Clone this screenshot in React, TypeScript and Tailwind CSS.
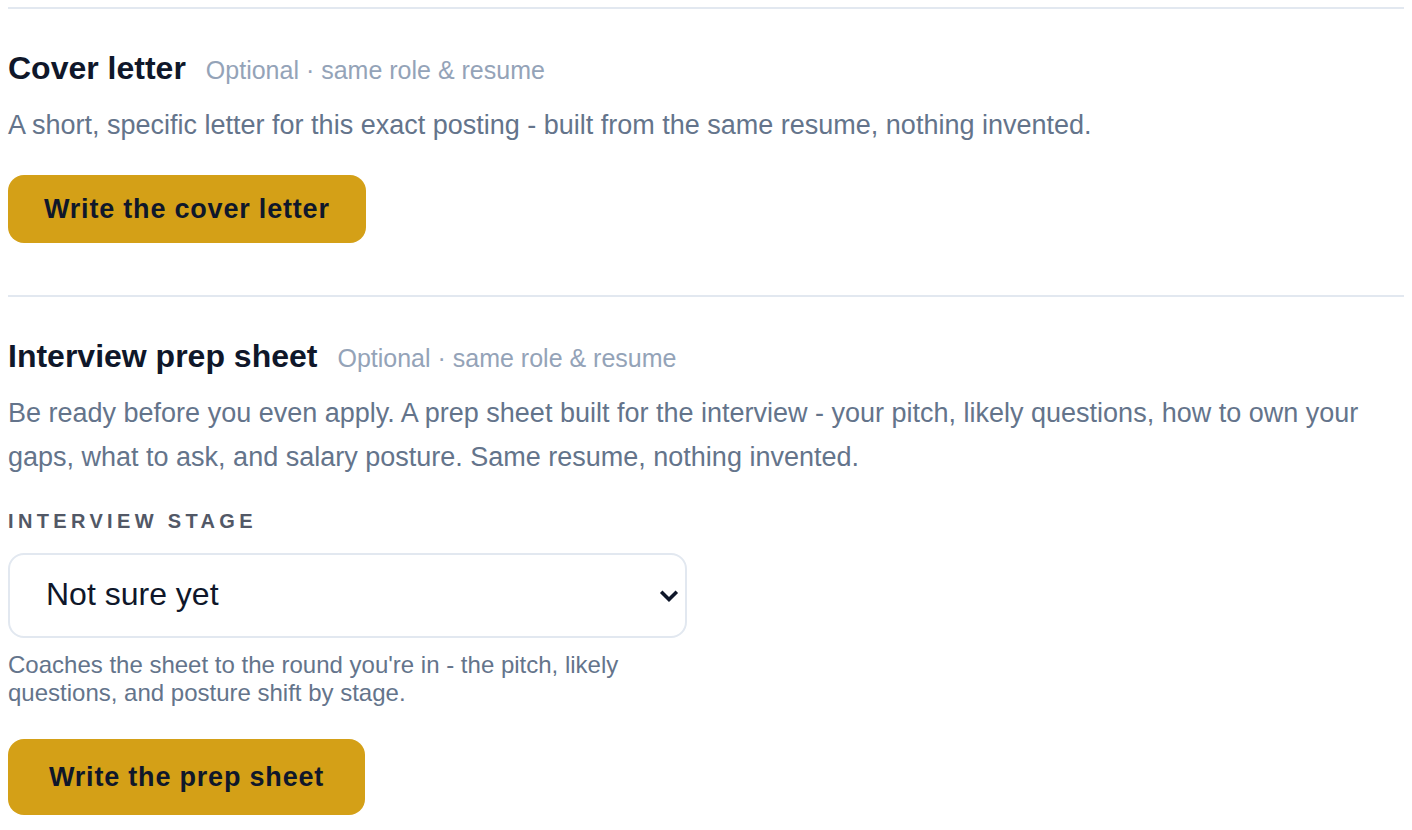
import { useState } from 'react'

function Chevron() {
  return (
    <svg
      viewBox="0 0 20 13"
      className="pointer-events-none absolute right-[8px] top-1/2 h-[13px] w-[20px] -translate-y-1/2"
      fill="none"
      stroke="#0f172a"
      strokeWidth={3.6}
      strokeLinejoin="miter"
    >
      <path d="M2.2 2.2 L10 10 L17.8 2.2" />
    </svg>
  )
}

function SectionHeading({ title }: { title: string }) {
  return (
    <div className="flex items-baseline gap-5">
      <h2 className="text-[32px] font-bold leading-[40px] text-[#0f172a]">{title}</h2>
      <span className="text-[25px] leading-[32px] text-[#94a3b8]">Optional · same role &amp; resume</span>
    </div>
  )
}

export default function App() {
  const [stage, setStage] = useState('unsure')

  return (
    <div className="min-h-screen bg-white px-2 pt-[7px] font-['Liberation_Sans',Arial,sans-serif]">
      <section className="border-t-2 border-[#e2e8f0] pb-[52px] pt-[39px]">
        <SectionHeading title="Cover letter" />
        <p className="mt-[15px] text-[27px] leading-[44px] text-[#64748b]">
          A short, specific letter for this exact posting - built from the same resume, nothing invented.
        </p>
        <button
          type="button"
          className="mt-[28px] flex h-[68px] w-fit items-center rounded-[16px] bg-[#d4a017] px-[36px] text-[27px] font-bold tracking-[0.8px] text-[#0f172a]"
        >
          Write the cover letter
        </button>
      </section>

      <section className="border-t-2 border-[#e2e8f0] pt-[39px]">
        <SectionHeading title="Interview prep sheet" />
        <p className="mt-[15px] text-[27px] leading-[44px] text-[#64748b]">
          Be ready before you even apply. A prep sheet built for the interview - your pitch, likely questions, how
          to own your gaps, what to ask, and salary posture. Same resume, nothing invented.
        </p>

        <label
          htmlFor="stage"
          className="mt-[28px] block text-[20px] font-bold uppercase leading-[28px] tracking-[4.35px] text-[#525866]"
        >
          Interview stage
        </label>
        <div className="relative mt-[18px] w-[679px]">
          <select
            id="stage"
            value={stage}
            onChange={(e) => setStage(e.target.value)}
            className="h-[85px] w-full appearance-none rounded-[16px] border-2 border-[#e2e8f0] bg-white pb-[3px] pl-[36px] pr-[48px] text-[32px] text-[#0f172a] outline-none"
          >
            <option value="unsure">Not sure yet</option>
            <option value="screen">Recruiter screen</option>
            <option value="hm">Hiring manager</option>
            <option value="panel">Panel / onsite</option>
            <option value="final">Final round</option>
          </select>
          <Chevron />
        </div>
        <p className="mt-[13px] max-w-[680px] text-[24px] leading-[28px] text-[#64748b]">
          Coaches the sheet to the round you're in - the pitch, likely questions, and posture shift by stage.
        </p>

        <button
          type="button"
          className="mt-[32px] flex h-[76px] w-fit items-center rounded-[16px] bg-[#d4a017] px-[41px] text-[27px] font-bold tracking-[0.8px] text-[#0f172a]"
        >
          Write the prep sheet
        </button>
      </section>
    </div>
  )
}
